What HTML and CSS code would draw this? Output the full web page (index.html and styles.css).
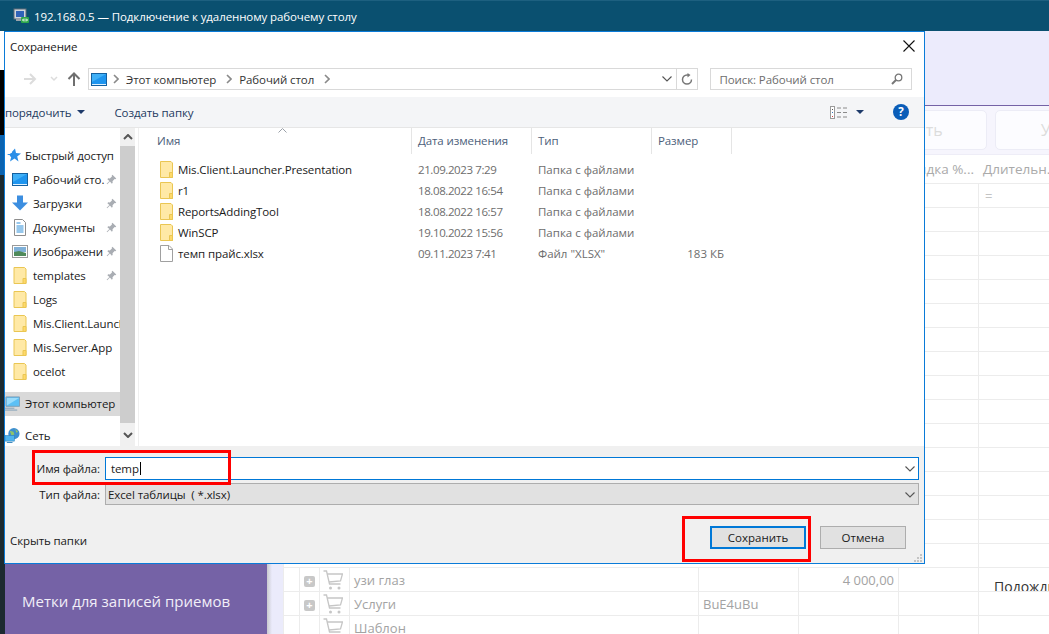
FILE: index.html
```html
<!DOCTYPE html>
<html lang="ru">
<head>
    <meta charset="UTF-8">
    <title>192.168.0.5 — Подключение к удаленному рабочему столу</title>
    <link rel="stylesheet" href="styles.css">
</head>
<body>

<svg class="defs" width="0" height="0">
    <symbol id="folder" viewBox="0 0 13 17">
        <path d="M.5.5h10.5l1.500 1.500v14.500h-12z" fill="#ffe9a6" stroke="#eac653"/>
        <path d="M9.500 16.500v-5h3v5z" fill="#ffd968" stroke="#eac653"/>
    </symbol>
    <symbol id="pin" viewBox="0 0 12 12">
        <path d="M7 .8l4.200 4.200-1 .8-.8-.3-2.300 2.300.2 1.800-.9.900-2.100-2.200-3 3-.6-.6 3-3-2.200-2.100.9-.9 1.800.2 2.300-2.300-.3-.8z" fill="#a9adb3"/>
    </symbol>
    <symbol id="desktop" viewBox="0 0 16 13">
        <rect x=".5" y=".5" width="15" height="12" fill="#1e95ef" stroke="#14609f"/>
        <path d="M1 11h14v1H1z" fill="#dff1ff"/>
        <path d="M1 1h14L1 9z" fill="#3fb0f7"/>
    </symbol>
    <symbol id="chev" viewBox="0 0 10 6">
        <path d="M.5.5L5 5 9.500.5" fill="none" stroke="#555" stroke-width="1.100"/>
    </symbol>
    <symbol id="crumb" viewBox="0 0 6 10">
        <path d="M1 1l4 4-4 4" fill="none" stroke="#8a8a8a" stroke-width="1.600"/>
    </symbol>
    <symbol id="cart" viewBox="0 0 20 20">
        <path d="M.5 1h3l3 13h11M4.500 4h15l-2 7-11.500 1" fill="none" stroke="#c6c6c6" stroke-width="1.300"/>
        <circle cx="7.500" cy="18" r="1.500" fill="#c6c6c6"/>
        <circle cx="16" cy="18" r="1.500" fill="#c6c6c6"/>
    </symbol>
</svg>

<header class="rdp-bar">
    <svg class="rdp-icon" viewBox="0 0 16 16" width="16" height="16">
        <rect x="1" y="1" width="12" height="10" fill="#cfd6dc" stroke="#5e6b78"/>
        <rect x="3" y="3" width="8" height="6" fill="#2f63b8"/>
        <path d="M3 11h8v2H3z" fill="#9aa3ab"/>
        <rect x="8" y="9" width="8" height="6" rx="1" fill="#2fa84a"/>
        <path d="M9.500 12h5M11 10.500L9.500 12l1.500 1.500M13 10.500l1.500 1.500-1.500 1.500" fill="none" stroke="#fff" stroke-width=".8"/>
    </svg>
    <span>192.168.0.5 — Подключение к удаленному рабочему столу</span>
</header>

<div class="desktop">
    <div class="edge">
        <div class="edge-white"></div>
        <div class="edge-black"></div>
        <div class="edge-blue"></div>
    </div>

    <div class="app">
        <div class="app-head"></div>
        <div class="app-body">
            <aside class="side">
                <div class="side-panel">Метки для записей приемов</div>
                <div class="side-gap"></div>
            </aside>
            <main class="work">
                <div class="actions">
                    <div class="action">Добавить</div>
                    <div class="action">Удалить</div>
                </div>
                <div class="col-heads">
                    <div class="col-head col-head-discount">Скидка %...</div>
                    <div class="col-head">Длительн...</div>
                </div>
                <table class="grid">
                    <colgroup>
                        <col class="w16"><col class="w20"><col class="w30"><col class="w349">
                        <col class="w100"><col class="w100"><col class="w80"><col class="w71">
                    </colgroup>
                    <tr><td colspan="7"></td><td class="filter">=</td></tr>
                    <tr><td colspan="7"></td><td></td></tr>
                    <tr><td colspan="7"></td><td></td></tr>
                    <tr><td colspan="7"></td><td></td></tr>
                    <tr><td colspan="7"></td><td></td></tr>
                    <tr><td colspan="7"></td><td></td></tr>
                    <tr><td colspan="7"></td><td></td></tr>
                    <tr><td colspan="7"></td><td></td></tr>
                    <tr><td colspan="7"></td><td></td></tr>
                    <tr><td colspan="7"></td><td></td></tr>
                    <tr><td colspan="7"></td><td></td></tr>
                    <tr><td colspan="7"></td><td></td></tr>
                    <tr><td colspan="7"></td><td></td></tr>
                    <tr><td colspan="7"></td><td></td></tr>
                    <tr><td colspan="7"></td><td></td></tr>
                    <tr><td colspan="7"></td><td></td></tr>
                    <tr>
                        <td class="ico"></td><td class="ico"><span class="plus">+</span></td>
                        <td class="ico"><svg class="cart"><use href="#cart"/></svg></td>
                        <td>узи глаз</td><td></td><td class="num">4 000,00</td><td></td>
                        <td class="ico"><div class="wait">Подождите</div></td>
                    </tr>
                    <tr>
                        <td class="ico"></td><td class="ico"><span class="plus">+</span></td>
                        <td class="ico"><svg class="cart"><use href="#cart"/></svg></td>
                        <td>Услуги</td><td>BuE4uBu</td><td></td><td></td><td></td>
                    </tr>
                    <tr>
                        <td class="ico"></td><td class="ico"></td>
                        <td class="ico"><svg class="cart"><use href="#cart"/></svg></td>
                        <td>Шаблон</td><td></td><td></td><td></td><td></td>
                    </tr>
                </table>
            </main>
        </div>
    </div>

    <section class="dialog">
        <div class="dlg-title">
            <span>Сохранение</span>
            <svg class="dlg-close" viewBox="0 0 12 12" width="12" height="12">
                <path d="M.5.5l11 11M11.500.5l-11 11" stroke="#111" stroke-width="1.100"/>
            </svg>
        </div>

        <div class="dlg-nav">
            <svg class="nav-arrows" viewBox="0 0 60 14" width="60" height="14">
                <path d="M1 7h11M7 2l5 5-5 5" fill="none" stroke="#dcdcdc" stroke-width="2"/>
                <path d="M28 5l3 3 3-3" fill="none" stroke="#dcdcdc" stroke-width="1.500"/>
                <path d="M51 14V2M45.500 7L51 1.500 56.500 7" fill="none" stroke="#6f6f6f" stroke-width="2"/>
            </svg>
            <div class="address">
                <svg class="addr-pc"><use href="#desktop"/></svg>
                <svg class="crumb"><use href="#crumb"/></svg>
                <span class="addr-text">Этот компьютер</span>
                <svg class="crumb"><use href="#crumb"/></svg>
                <span class="addr-text">Рабочий стол</span>
                <svg class="crumb"><use href="#crumb"/></svg>
                <svg class="addr-drop"><use href="#chev"/></svg>
                <div class="addr-refresh">
                    <svg viewBox="0 0 12 12" width="12" height="12">
                        <path d="M10.500 6.500A4.500 4.500 0 1 1 6 2h2" fill="none" stroke="#777" stroke-width="1.500"/>
                        <path d="M6.500 0l3 2-3 2.500z" fill="#777"/>
                    </svg>
                </div>
            </div>
            <div class="search">
                <span>Поиск: Рабочий стол</span>
                <svg viewBox="0 0 12 12" width="12" height="12">
                    <circle cx="7.500" cy="4.500" r="3.300" fill="none" stroke="#777" stroke-width="1.300"/>
                    <path d="M5 7l-4 4" stroke="#777" stroke-width="2"/>
                </svg>
            </div>
        </div>

        <div class="dlg-tools">
            <span class="tool">порядочить</span>
            <span class="caret"></span>
            <span class="tool tool-new">Создать папку</span>
            <svg class="view-icon" viewBox="0 0 17 13" width="17" height="13">
                <rect x=".5" y=".5" width="4" height="12" fill="#fff" stroke="#9a9a9a"/>
                <path d="M2 3h1v1H2z" fill="#555"/>
                <path d="M2 6h1v1H2z" fill="#3778c0"/>
                <path d="M2 10h1v1H2z" fill="#d04040"/>
                <path d="M7 2h4M13 2h4M7 6.500h4M13 6.500h4M7 11h4M13 11h4" stroke="#8a8a8a"/>
            </svg>
            <span class="caret caret-view"></span>
            <span class="help">?</span>
        </div>

        <div class="dlg-main">
            <nav class="tree">
                <div class="tree-item tree-top">
                    <svg class="tree-icon" viewBox="0 0 14 13">
                        <path d="M8 0l1 4.500 5 .5-3.800 3L11.500 13 7.500 10 3 13l1.200-4.500L0 5.500h3z" fill="#2b8fe8"/>
                        <path d="M0 4h5M0 7h3" stroke="#fff" stroke-width=".8"/>
                    </svg>
                    <span>Быстрый доступ</span>
                </div>
                <div class="tree-item">
                    <svg class="tree-icon"><use href="#desktop"/></svg>
                    <span class="tree-text">Рабочий сто.</span>
                    <svg class="pin"><use href="#pin"/></svg>
                </div>
                <div class="tree-item">
                    <svg class="tree-icon tree-icon-tall" viewBox="0 0 16 16">
                        <path d="M5 0h6v7h5l-8 8-8-8h5z" fill="#3c8ee0"/>
                    </svg>
                    <span class="tree-text">Загрузки</span>
                    <svg class="pin"><use href="#pin"/></svg>
                </div>
                <div class="tree-item">
                    <svg class="tree-icon tree-icon-tall" viewBox="0 0 16 17">
                        <path d="M2.500.5h8l3 3v13h-11z" fill="#fff" stroke="#8d8d8d"/>
                        <path d="M4.500 4h4M4.500 7h7M4.500 9h7M4.500 11h7M4.500 13h7" stroke="#2f8fd8"/>
                    </svg>
                    <span class="tree-text">Документы</span>
                    <svg class="pin"><use href="#pin"/></svg>
                </div>
                <div class="tree-item">
                    <svg class="tree-icon" viewBox="0 0 16 13">
                        <rect x=".5" y=".5" width="15" height="12" fill="#fff" stroke="#9a9a9a"/>
                        <path d="M2 2h12v5H2z" fill="#7fb0d8"/>
                        <path d="M2 7l5-1 7 2v3H2z" fill="#4f8a5a"/>
                    </svg>
                    <span class="tree-text">Изображени</span>
                    <svg class="pin"><use href="#pin"/></svg>
                </div>
                <div class="tree-item">
                    <svg class="tree-icon tree-icon-tall"><use href="#folder"/></svg>
                    <span class="tree-text">templates</span>
                    <svg class="pin"><use href="#pin"/></svg>
                </div>
                <div class="tree-item">
                    <svg class="tree-icon tree-icon-tall"><use href="#folder"/></svg>
                    <span class="tree-text">Logs</span>
                </div>
                <div class="tree-item">
                    <svg class="tree-icon tree-icon-tall"><use href="#folder"/></svg>
                    <span class="tree-text">Mis.Client.Launcher</span>
                </div>
                <div class="tree-item">
                    <svg class="tree-icon tree-icon-tall"><use href="#folder"/></svg>
                    <span class="tree-text">Mis.Server.App</span>
                </div>
                <div class="tree-item">
                    <svg class="tree-icon tree-icon-tall"><use href="#folder"/></svg>
                    <span class="tree-text">ocelot</span>
                </div>
                <div class="tree-item tree-top tree-group tree-selected">
                    <svg class="tree-icon" viewBox="0 0 16 15">
                        <path d="M1 .5h14.500v10H1z" fill="#5cc0f5" stroke="#7d9db5"/>
                        <path d="M2 1.500h13l-13 8z" fill="#9adcfb"/>
                        <path d="M0 12.500h10M0 14.500h13" stroke="#7d9db5"/>
                    </svg>
                    <span>Этот компьютер</span>
                </div>
                <div class="tree-item tree-top tree-group">
                    <svg class="tree-icon" viewBox="0 0 16 16">
                        <circle cx="9.500" cy="6" r="6" fill="#3d8fd0"/>
                        <path d="M5 3l4 1 1 3-3 1zM11 1l3 3-2 1z" fill="#8fc46a"/>
                        <rect x="0" y="8" width="10" height="6" fill="#4fb4ee" stroke="#2f7fb8" stroke-width=".6"/>
                        <path d="M2 15.500h6" stroke="#2f7fb8"/>
                    </svg>
                    <span>Сеть</span>
                </div>
            </nav>

            <div class="tree-scroll">
                <svg class="scroll-up" viewBox="0 0 10 6" width="10" height="6"><path d="M1 5l4-4 4 4" fill="none" stroke="#555" stroke-width="2"/></svg>
                <div class="scroll-thumb"></div>
                <svg class="scroll-down" viewBox="0 0 10 6" width="10" height="6"><path d="M1 1l4 4 4-4" fill="none" stroke="#555" stroke-width="2"/></svg>
            </div>

            <div class="files">
                <div class="file-head">
                    <div class="head-cell head-name">Имя<svg class="sort" viewBox="0 0 9 5" width="9" height="5"><path d="M.5 4.500L4.500.5l4 4" fill="none" stroke="#9aa0a8"/></svg></div>
                    <div class="head-cell">Дата изменения</div>
                    <div class="head-cell">Тип</div>
                    <div class="head-cell">Размер</div>
                </div>
                <div class="file-rows">
                    <div class="file-row">
                        <div class="file-name"><svg class="file-icon"><use href="#folder"/></svg>Mis.Client.Launcher.Presentation</div>
                        <div class="file-meta file-date">21.09.2023 7:29</div>
                        <div class="file-meta">Папка с файлами</div>
                        <div></div>
                    </div>
                    <div class="file-row">
                        <div class="file-name"><svg class="file-icon"><use href="#folder"/></svg>r1</div>
                        <div class="file-meta file-date">18.08.2022 16:54</div>
                        <div class="file-meta">Папка с файлами</div>
                        <div></div>
                    </div>
                    <div class="file-row">
                        <div class="file-name"><svg class="file-icon"><use href="#folder"/></svg>ReportsAddingTool</div>
                        <div class="file-meta file-date">18.08.2022 16:57</div>
                        <div class="file-meta">Папка с файлами</div>
                        <div></div>
                    </div>
                    <div class="file-row">
                        <div class="file-name"><svg class="file-icon"><use href="#folder"/></svg>WinSCP</div>
                        <div class="file-meta file-date">19.10.2022 15:56</div>
                        <div class="file-meta">Папка с файлами</div>
                        <div></div>
                    </div>
                    <div class="file-row">
                        <div class="file-name">
                            <svg class="file-icon" viewBox="0 0 13 17"><path d="M.5.500h8.500l3.500 3.500v12.500h-12z" fill="#fff" stroke="#a0a0a0"/><path d="M8.500.5v4h4" fill="none" stroke="#a0a0a0"/></svg>темп прайс.xlsx
                        </div>
                        <div class="file-meta file-date">09.11.2023 7:41</div>
                        <div class="file-meta">Файл "XLSX"</div>
                        <div class="file-meta file-size">183 КБ</div>
                    </div>
                </div>
            </div>
        </div>

        <div class="dlg-bottom">
            <div class="field">
                <label class="field-label">Имя файла:</label>
                <div class="field-box field-input"><span>temp</span><i class="text-caret"></i><svg class="field-chev"><use href="#chev"/></svg></div>
            </div>
            <div class="field">
                <label class="field-label">Тип файла:</label>
                <div class="field-box field-combo"><span>Excel таблицы  ( *.xlsx)</span><svg class="field-chev"><use href="#chev"/></svg></div>
            </div>
            <div class="dlg-actions">
                <span class="hide-folders">Скрыть папки</span>
                <button class="btn btn-save">Сохранить</button>
                <button class="btn btn-cancel">Отмена</button>
            </div>
            <svg class="grip" viewBox="0 0 9 9" width="9" height="9">
                <path d="M7 1h2v2H7zM4 4h2v2H4zM7 4h2v2H7zM1 7h2v2H1zM4 7h2v2H4zM7 7h2v2H7z" fill="#c4c4c4"/>
            </svg>
        </div>

        <div class="mark mark-name"></div>
        <div class="mark mark-save"></div>
    </section>
</div>

</body>
</html>
```

FILE: styles.css
```css
* {
    box-sizing: border-box;
}

html, body {
    height: 100%;
}

body {
    margin: 0;
    display: flex;
    flex-direction: column;
    overflow: hidden;
    font-family: "Open Sans", "Noto Sans", sans-serif;
    font-size: 11.5px;
    letter-spacing: -0.1px;
    color: #1a1a1a;
    background-color: #1c2a30;
}

.defs {
    position: absolute;
}

/* remote desktop bar */
.rdp-bar {
    flex: none;
    display: flex;
    align-items: center;
    gap: 5px;
    height: 31px;
    padding-left: 13px;
    color: #fff;
    background-color: #0a5070;
    border-top: 1px solid #1d6080;
}

/* desktop behind the dialog */
.desktop {
    position: relative;
    flex: 1;
    display: flex;
    min-height: 0;
}

.edge {
    flex: none;
    width: 5px;
}

.edge-white {
    height: 39px;
    background-color: #fff;
}

.edge-black {
    height: 65px;
    background-color: #000;
}

.edge-blue {
    height: 40px;
    background-color: #0b63b0;
}

.app {
    flex: 1;
    display: flex;
    flex-direction: column;
    min-width: 0;
    overflow: hidden;
    background-color: #fff;
}

.app-head {
    flex: none;
    height: 75px;
    background-color: #ecebfc;
    border-bottom: 1px solid #7562a6;
}

.app-body {
    flex: 1;
    display: flex;
    min-height: 0;
}

.side {
    flex: none;
    width: 278px;
    display: flex;
    align-items: flex-end;
}

.side-panel {
    width: 262px;
    height: 120px;
    padding: 0 0 23px 17px;
    display: flex;
    align-items: flex-end;
    font-size: 15px;
    letter-spacing: 0;
    color: #f1eef8;
    background-color: #7562a6;
}

.side-gap {
    align-self: stretch;
    flex: 1;
    background: linear-gradient(to right, #c8c8ce, #ebebfb 5px);
}

.work {
    flex: 1;
    min-width: 0;
    overflow: hidden;
    display: flex;
    flex-direction: column;
}

.actions {
    flex: none;
    height: 49px;
    display: flex;
    gap: 8px;
    padding: 4px 0 4px 544px;
    overflow: hidden;
    background-color: #f6f5fd;
    border-bottom: 1px solid #eeedf7;
}

.action {
    flex: none;
    width: 160px;
    height: 40px;
    padding-right: 4px;
    line-height: 38px;
    text-align: center;
    font-size: 16px;
    letter-spacing: 0;
    color: #dcdcdc;
    background-color: #fcfcff;
    border: 1px solid #ececf6;
    border-radius: 5px;
}

.col-heads {
    flex: none;
    height: 28px;
    display: flex;
    padding-left: 615px;
    white-space: nowrap;
}

.col-head {
    flex: none;
    width: 85px;
    line-height: 29px;
    font-size: 13.500px;
    letter-spacing: 0;
    color: #aaa;
}

.col-head-discount {
    text-align: right;
    padding-right: 9px;
}

.grid {
    width: 766px;
    table-layout: fixed;
    border-collapse: collapse;
    font-size: 13px;
    letter-spacing: 0;
    color: #a3a3a3;
}

.w16 { width: 16px; }
.w20 { width: 20px; }
.w30 { width: 30px; }
.w349 { width: 349px; }
.w100 { width: 100px; }
.w80 { width: 80px; }
.w71 { width: 71px; }

.grid tr {
    height: 24px;
}

.grid td {
    height: 24px;
    padding: 0 4px;
    border: 1px solid #ececec;
    overflow: hidden;
    white-space: nowrap;
}

.grid .ico,
.grid td[colspan] {
    padding: 0;
    text-align: center;
}

.grid .filter {
    color: #c4c4c4;
    padding-left: 6px;
}

.grid .num {
    text-align: right;
}

.wait {
    height: 23px;
    padding: 9px 0 0 15px;
    line-height: 20px;
    text-align: left;
    font-size: 14px;
    overflow: hidden;
    color: #333;
}

.plus {
    display: inline-block;
    width: 11px;
    height: 11px;
    line-height: 10px;
    font-size: 11px;
    font-weight: 700;
    text-align: center;
    color: #fff;
    background-color: #c8c8c8;
    border-radius: 2px;
}

.cart {
    display: block;
    width: 20px;
    height: 20px;
    margin: 1px 0 0 3px;
}

/* save dialog */
.dialog {
    position: absolute;
    left: 4px;
    top: 0;
    width: 921px;
    height: 533px;
    display: flex;
    flex-direction: column;
    background-color: #fff;
    border: 1px solid #0a7bd8;
}

.dlg-title {
    flex: none;
    height: 30px;
    display: flex;
    align-items: center;
    justify-content: space-between;
    padding: 0 9px 2px 5px;
}

.dlg-nav {
    flex: none;
    height: 35px;
    display: flex;
    align-items: center;
    padding: 0 12px 1px 18px;
}

.nav-arrows {
    flex: none;
    margin-right: 5px;
}

.address {
    width: 612px;
    height: 22px;
    margin-right: 12px;
    display: flex;
    align-items: center;
    padding-left: 2px;
    color: #333;
    border: 1px solid #d9d9d9;
}

.addr-pc {
    flex: none;
    width: 16px;
    height: 13px;
    margin-right: -4px;
}

.crumb {
    flex: none;
    width: 6px;
    height: 10px;
    margin: 0 7px 0 10px;
}

.addr-text {
    white-space: nowrap;
}

.addr-drop {
    flex: none;
    width: 10px;
    height: 6px;
    margin-left: auto;
    margin-right: 4px;
}

.addr-refresh {
    flex: none;
    width: 21px;
    height: 20px;
    display: flex;
    align-items: center;
    justify-content: center;
    border-left: 1px solid #d9d9d9;
}

.search {
    width: 202px;
    height: 22px;
    display: flex;
    align-items: center;
    justify-content: space-between;
    padding: 0 8px;
    color: #6d6d6d;
    border: 1px solid #d9d9d9;
}

.dlg-tools {
    flex: none;
    height: 31px;
    display: flex;
    align-items: center;
    color: #1e3a5f;
    background-color: #f4f5f7;
    border-bottom: 1px solid #e6e6e6;
}

.tool {
    white-space: nowrap;
}

.caret {
    width: 0;
    height: 0;
    margin-left: 6px;
    border-style: solid;
    border-width: 4px 4px 0;
    border-color: #1e3a6a transparent transparent;
}

.tool-new {
    margin-left: 29px;
}

.view-icon {
    margin-left: auto;
}

.caret-view {
    margin-left: 9px;
}

.help {
    width: 16px;
    height: 16px;
    margin: 0 15px 0 29px;
    line-height: 16px;
    text-align: center;
    font-weight: 700;
    color: #fff;
    background-color: #0a5db8;
    border-radius: 50%;
}

.dlg-main {
    flex: 1;
    display: flex;
    min-height: 0;
}

.tree {
    flex: none;
    width: 115px;
    padding-top: 16px;
    overflow: hidden;
}

.tree-item {
    position: relative;
    height: 24px;
    display: flex;
    align-items: center;
    padding: 0 0 2px 7px;
    white-space: nowrap;
    overflow: hidden;
}

.tree-top {
    padding-left: 2px;
    gap: 4px;
}

.tree-top .tree-icon {
    width: 14px;
    height: 14px;
    margin-right: 0;
}

.tree-group {
    margin-top: 8px;
    padding-left: 0;
    gap: 5px;
}

.tree-group .tree-icon {
    width: 15px;
    height: 15px;
}

.tree-selected {
    background-color: #d9d9d9;
}

.tree-icon {
    flex: none;
    width: 16px;
    height: 13px;
    margin-right: 5px;
}

.tree-icon-tall {
    height: 17px;
}

.tree-text {
    flex: none;
}

.pin {
    position: absolute;
    left: 101px;
    top: 6px;
    width: 11px;
    height: 11px;
}

.tree-scroll {
    flex: none;
    width: 15px;
    display: flex;
    flex-direction: column;
    align-items: center;
    padding-top: 6px;
    background-color: #f0f0f0;
}

.scroll-thumb {
    width: 15px;
    height: 277px;
    margin-top: 6px;
    background-color: #cdcdcd;
}

.scroll-down {
    margin-top: 9px;
}

.files {
    flex: 1;
    margin-left: 3px;
    border-left: 1px solid #efefef;
}

.file-head,
.file-row {
    display: grid;
    grid-template-columns: 273px 120px 120px 80px;
}

.file-head {
    height: 26px;
}

.head-cell {
    position: relative;
    line-height: 26px;
    padding-left: 6px;
    color: #4c607a;
    border-right: 1px solid #e5e5e5;
}

.head-name {
    padding-left: 18px;
}

.sort {
    position: absolute;
    left: 139px;
    top: 0;
}

.file-rows {
    padding-top: 5px;
}

.file-row {
    height: 21px;
    align-items: center;
}

.file-name {
    display: flex;
    align-items: center;
    padding-left: 21px;
    white-space: nowrap;
}

.file-icon {
    flex: none;
    width: 13px;
    height: 17px;
    margin-right: 5px;
}

.file-meta {
    padding-left: 6px;
    white-space: nowrap;
    letter-spacing: 0;
    color: #6d6d6d;
}

.file-date {
    letter-spacing: -0.4px;
}

.file-size {
    padding-right: 8px;
    text-align: right;
}

.dlg-bottom {
    position: relative;
    flex: none;
    height: 117px;
    padding: 11px 5px 0 0;
    background-color: #f0f0f0;
}

.field {
    display: flex;
    align-items: center;
    margin-bottom: 3px;
}

.field-label {
    flex: none;
    width: 95px;
    text-align: right;
    margin-right: 5px;
}

.field-box {
    flex: 1;
    position: relative;
    display: flex;
    align-items: center;
    white-space: pre;
}

.field-input {
    height: 23px;
    padding-left: 5px;
    background-color: #fff;
    border: 1px solid #0078d7;
}

.field-combo {
    height: 22px;
    padding-left: 2px;
    background-color: #e1e1e1;
    border: 1px solid #adadad;
}

.text-caret {
    width: 1px;
    height: 13px;
    margin-left: 1px;
    background-color: #000;
}

.field-chev {
    position: absolute;
    right: 3px;
    top: 8px;
    width: 10px;
    height: 6px;
}

.dlg-actions {
    display: flex;
    align-items: center;
    gap: 14px;
    margin-top: 21px;
    padding: 0 13px 0 5px;
}

.hide-folders {
    margin-right: auto;
    padding-top: 6px;
}

.btn {
    height: 23px;
    font: inherit;
    color: #1a1a1a;
    background-color: #e1e1e1;
    padding: 0;
}

.btn-save {
    width: 96px;
    border: 2px solid #0078d7;
}

.btn-cancel {
    width: 86px;
    border: 1px solid #adadad;
}

.grip {
    position: absolute;
    right: 2px;
    bottom: 1px;
}

/* red marks drawn over the screenshot */
.mark {
    position: absolute;
    border: 3px solid #f00;
}

.mark-name {
    left: 27px;
    top: 418px;
    width: 199px;
    height: 35px;
}

.mark-save {
    left: 677px;
    top: 484px;
    width: 129px;
    height: 46px;
}
```
